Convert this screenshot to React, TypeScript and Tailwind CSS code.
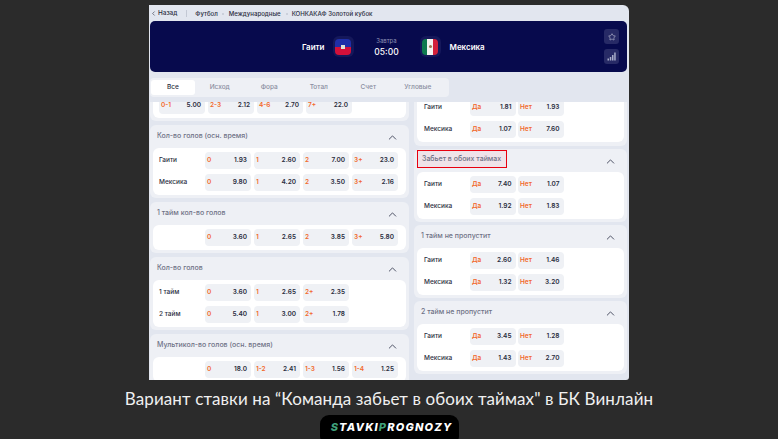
import { ChevronUp, ChevronLeft, Star } from 'lucide-react'

type Row = { label: string; cells: [string, string][] }

function Cell({ name, value, narrow }: { name: string; value: string; narrow?: boolean }) {
  return (
    <div
      className={`flex h-[17px] items-center justify-between rounded-[4px] bg-[#eff1f5] pl-[2px] pr-[4px] text-[6.5px] font-semibold ${
        narrow ? 'w-[45.5px]' : 'w-[46px]'
      }`}
    >
      <span className="text-[#f2692c]">{name}</span>
      <span className="text-[#2a2d3e]">{value}</span>
    </div>
  )
}

function Market({
  title,
  rows,
  highlight,
  narrow,
}: {
  title: string
  rows: Row[]
  highlight?: boolean
  narrow?: boolean
}) {
  return (
    <section className="rounded-[6px] bg-[#eef0f5] px-[3px] pb-[3px]">
      <div className="flex h-[23px] items-center justify-between pl-[4px] pr-[7px]">
        <span
          className={
            highlight
              ? 'ml-[-4px] mt-[-2px] flex h-[18px] w-[90px] items-center border border-[#e8000f] bg-[#efe3e9] pl-[4px] text-[7px] font-medium text-[#6f7286]'
              : 'text-[7px] font-medium text-[#6f7286]'
          }
        >
          {title}
        </span>
        <ChevronUp size={13} strokeWidth={1.8} className="mt-[2px] text-[#4b4f63]" />
      </div>
      <div className="flex flex-col gap-[5px] rounded-[6px] bg-white pb-[4px] pt-[4.5px]">
        {rows.map((r) => (
          <div key={r.label} className="flex items-center">
            <span
              className={`shrink-0 text-[6.5px] font-medium text-[#2a2d3e] ${
                narrow ? 'w-[53px] pl-[7px]' : 'w-[52px] pl-[6px]'
              }`}
            >
              {r.label}
            </span>
            <div className={narrow ? 'flex gap-[2.5px]' : 'flex gap-[3px]'}>
              {r.cells.map(([n, v]) => (
                <Cell key={n} name={n} value={v} narrow={narrow} />
              ))}
            </div>
          </div>
        ))}
      </div>
    </section>
  )
}

const yesNo = (a: string, b: string): [string, string][] => [
  ['Да', a],
  ['Нет', b],
]

function HaitiFlag() {
  return (
    <div className="flex h-[21px] w-[21px] items-center justify-center rounded-[6px] bg-[#15185a]">
      <div className="relative flex h-[16px] w-[16px] flex-col overflow-hidden rounded-[4px]">
        <div className="h-1/2 bg-[#1f2fa8]" />
        <div className="h-1/2 bg-[#d2103a]" />
        <div className="absolute left-[6px] top-[6px] h-[4px] w-[4px] bg-[#dfe3d8]" />
      </div>
    </div>
  )
}

function MexicoFlag() {
  return (
    <div className="flex h-[21px] w-[21px] items-center justify-center rounded-[6px] bg-[#15185a]">
      <div className="relative flex h-[16px] w-[16px] overflow-hidden rounded-[4px]">
        <div className="w-1/3 bg-[#0f7a4f]" />
        <div className="w-1/3 bg-[#f4f4f0]" />
        <div className="w-1/3 bg-[#d3213a]" />
        <div className="absolute left-[6.5px] top-[6.5px] h-[3px] w-[3px] rounded-full bg-[#9a7a50]" />
      </div>
    </div>
  )
}

export default function App() {
  const tabs = ['Все', 'Исход', 'Фора', 'Тотал', 'Счет', 'Угловые']
  return (
    <div className="flex h-[439px] w-[778px] flex-col items-center overflow-hidden bg-[#2b2b2b] pt-[5px] font-['Inter',sans-serif]">
      <div className="h-[375px] w-[480px] shrink-0 overflow-hidden rounded-tr-[6px] rounded-br-[3px] bg-[#e2e6ef]">
        {/* breadcrumbs */}
        <div className="flex h-[16px] items-center pl-[1px] pt-[1px] text-[6.1px] font-medium text-[#2a2d3e]">
          <ChevronLeft size={7} strokeWidth={2} />
          <span className="ml-[1px] text-[6.4px]">Назад</span>
          <span className="ml-[9px] h-[7px] w-px bg-[#c3c8d4]" />
          <span className="ml-[8px]">Футбол</span>
          <span className="ml-[4px] h-[2px] w-[2px] rounded-full bg-[#c3c8d4]" />
          <span className="ml-[5px]">Международные</span>
          <span className="ml-[5px] h-[2px] w-[2px] rounded-full bg-[#c3c8d4]" />
          <span className="ml-[4px]">КОНКАКАФ Золотой кубок</span>
        </div>

        {/* match header */}
        <div className="ml-[1px] flex h-[51px] w-[477px] items-center rounded-[5px] bg-[#070a4d] text-white">
          <div className="ml-[152px] flex items-center">
            <span className="text-[8px] font-semibold">Гаити</span>
            <div className="ml-[8px]"><HaitiFlag /></div>
          </div>
          <div className="ml-[8px] flex w-[50px] flex-col items-center gap-[2px]">
            <span className="text-[6px] leading-[9px] text-[#8f93b5]">Завтра</span>
            <span className="text-[8.5px] font-medium leading-[11px]">05:00</span>
          </div>
          <div className="ml-[8px] flex items-center">
            <MexicoFlag />
            <span className="ml-[9px] text-[8px] font-semibold">Мексика</span>
          </div>
          <div className="ml-auto mr-[8px] flex flex-col gap-[5px]">
            <div className="flex h-[15px] w-[15px] items-center justify-center rounded-[3px] bg-[#272a66]">
              <Star size={8} strokeWidth={1.5} className="text-[#e4e6f2]" />
            </div>
            <div className="flex h-[15px] w-[15px] items-center justify-center rounded-[3px] bg-[#272a66]">
              <svg width="9" height="9" viewBox="0 0 9 9" className="text-[#a9adc9]" fill="currentColor">
                <rect x="0.5" y="6.5" width="1.5" height="2" />
                <rect x="2.8" y="5" width="1.5" height="3.5" />
                <rect x="5" y="3" width="1.5" height="5.5" />
                <rect x="7.2" y="0.5" width="1.5" height="8" />
              </svg>
            </div>
          </div>
        </div>

        {/* tabs */}
        <div className="ml-[1px] mt-[6px] flex h-[19px] w-[299px] items-center rounded-[4px] bg-[#eef0f5] pl-[1px] text-[6.5px] font-medium text-[#8a8ea0]">
          {tabs.map((t, i) => (
            <div
              key={t}
              className={
                i === 0
                  ? 'flex h-[15px] w-[44px] shrink-0 items-center justify-center rounded-[3px] bg-white text-[#2a2d3e]'
                  : 'flex h-[15px] w-[49.5px] shrink-0 items-center justify-center'
              }
            >
              {t}
            </div>
          ))}
        </div>

        {/* markets, scrolled so the first row of each column is cut at the top */}
        <div className="mt-[5px] flex h-[278px] gap-[5px] overflow-hidden pl-[1px]">
          <div className="-mt-[5px] flex w-[259px] shrink-0 flex-col gap-[3.5px]">
            <div className="rounded-b-[6px] bg-[#eef0f5] px-[3px] pb-[3px]">
              <div className="rounded-b-[6px] bg-white pb-[4px] pl-[6px]">
                <div className="flex gap-[3px]">
                  <Cell name="0-1" value="5.00" />
                  <Cell name="2-3" value="2.12" />
                  <Cell name="4-6" value="2.70" />
                  <Cell name="7+" value="22.0" />
                </div>
              </div>
            </div>
            <Market
              title="Кол-во голов (осн. время)"
              rows={[
                { label: 'Гаити', cells: [['0', '1.93'], ['1', '2.60'], ['2', '7.00'], ['3+', '23.0']] },
                { label: 'Мексика', cells: [['0', '9.80'], ['1', '4.20'], ['2', '3.50'], ['3+', '2.16']] },
              ]}
            />
            <Market
              title="1 тайм кол-во голов"
              rows={[{ label: '', cells: [['0', '3.60'], ['1', '2.65'], ['2', '3.85'], ['3+', '5.80']] }]}
            />
            <Market
              title="Кол-во голов"
              rows={[
                { label: '1 тайм', cells: [['0', '3.60'], ['1', '2.65'], ['2+', '2.35']] },
                { label: '2 тайм', cells: [['0', '5.40'], ['1', '3.00'], ['2+', '1.78']] },
              ]}
            />
            <Market
              title="Мультикол-во голов (осн. время)"
              rows={[{ label: '', cells: [['0', '18.0'], ['1-2', '2.41'], ['1-3', '1.56'], ['1-4', '1.25']] }]}
            />
          </div>

          <div className="-mt-[3px] flex w-[213px] shrink-0 flex-col gap-[2.5px]">
            <div className="rounded-b-[6px] bg-[#eef0f5] px-[3px] pb-[4px]">
              <div className="flex flex-col gap-[5px] rounded-b-[6px] bg-white pb-[4px]">
                {[
                  ['Гаити', '1.81', '1.93'],
                  ['Мексика', '1.07', '7.60'],
                ].map(([l, a, b]) => (
                  <div key={l} className="flex items-center">
                    <span className="w-[53px] shrink-0 pl-[7px] text-[6.5px] font-medium text-[#2a2d3e]">{l}</span>
                    <div className="flex gap-[2.5px]">
                      <Cell name="Да" value={a} narrow />
                      <Cell name="Нет" value={b} narrow />
                    </div>
                  </div>
                ))}
              </div>
            </div>
            <Market
              highlight
              narrow
              title="Забьет в обоих таймах"
              rows={[
                { label: 'Гаити', cells: yesNo('7.40', '1.07') },
                { label: 'Мексика', cells: yesNo('1.92', '1.83') },
              ]}
            />
            <Market
              narrow
              title="1 тайм не пропустит"
              rows={[
                { label: 'Гаити', cells: yesNo('2.60', '1.46') },
                { label: 'Мексика', cells: yesNo('1.32', '3.20') },
              ]}
            />
            <Market
              narrow
              title="2 тайм не пропустит"
              rows={[
                { label: 'Гаити', cells: yesNo('3.45', '1.28') },
                { label: 'Мексика', cells: yesNo('1.43', '2.70') },
              ]}
            />
          </div>
        </div>
      </div>

      {/* caption */}
      <p className="mt-[10px] shrink-0 whitespace-nowrap font-['Lato',sans-serif] text-[17px] leading-[18px] tracking-[0.1px] text-[#f0f0f0]">
        Вариант ставки на “Команда забьет в обоих таймах" в БК Винлайн
      </p>
      <div className="mt-[7px] flex h-[30px] w-[139px] shrink-0 justify-center rounded-[9px] bg-black pl-[5px] pt-[5.5px] text-[11px] font-extrabold italic leading-[12px] tracking-[1.2px] text-white">
        <span className="text-[#3fa27c]">S</span>TAVKI<span className="text-[#3fa27c]">P</span>ROGNOZY
      </div>
    </div>
  )
}
